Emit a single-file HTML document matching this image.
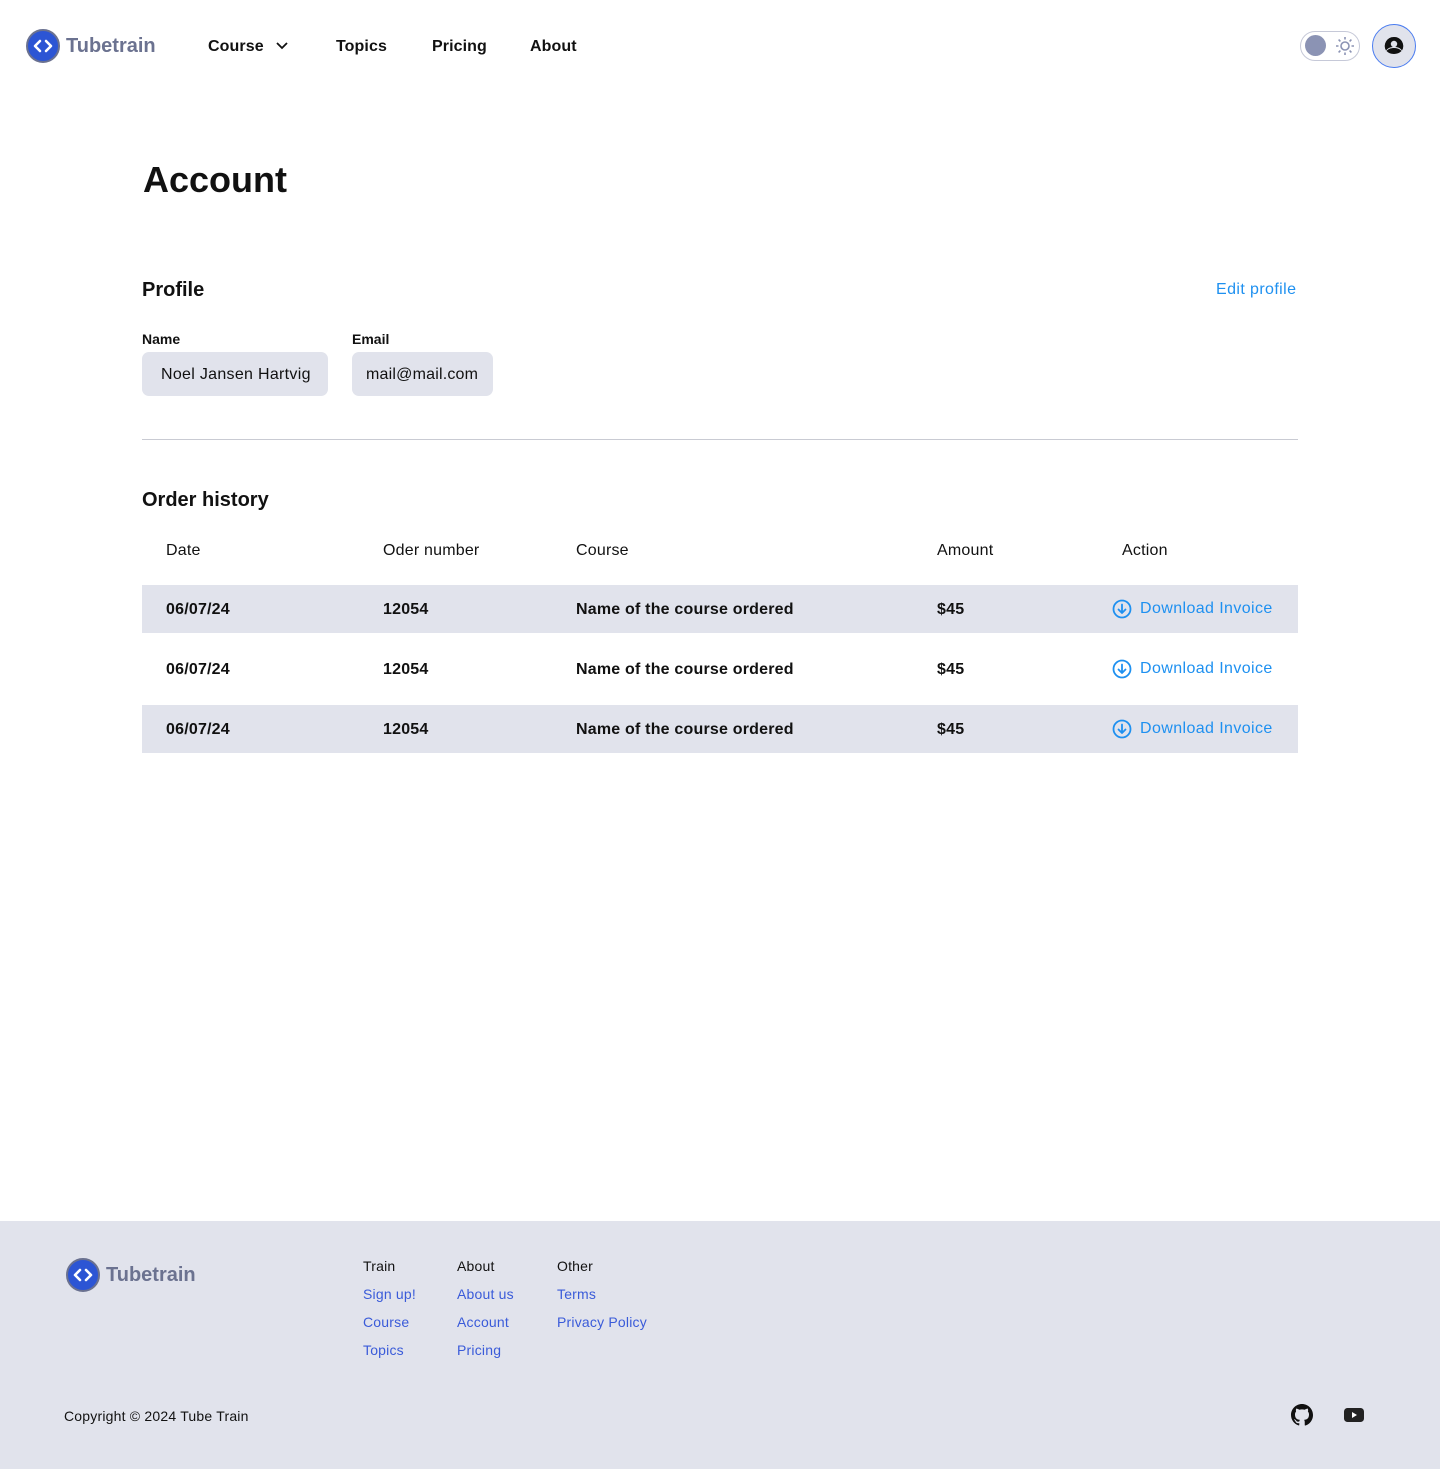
<!DOCTYPE html>
<html><head><meta charset="utf-8"><style>
*{margin:0;padding:0;box-sizing:border-box}
body{width:1440px;height:1469px;position:relative;font-family:"Liberation Sans",sans-serif;color:#111;background:#fff;overflow:hidden}
.a{position:absolute;white-space:nowrap}
.nav{font-size:16px;font-weight:bold;top:38px;letter-spacing:0.1px}
.row{position:absolute;left:142px;width:1156px;height:48px}
.row.g{background:#e1e3ec}
.cell{position:absolute;top:16px;font-size:16px;font-weight:bold;letter-spacing:0.2px}
.dl{position:absolute;left:970px;top:14px;color:#1e90f0;font-size:16px;display:flex;align-items:center;gap:8px;letter-spacing:0.4px}
.fl{font-size:14px;color:#3a5bd9;letter-spacing:0.2px}
.fh{font-size:14px;color:#111;letter-spacing:0.2px}
</style></head><body>
<svg class="a" style="left:26px;top:29px" width="34" height="34" viewBox="0 0 34 34"><circle cx="17" cy="17" r="16" fill="#2c55d4" stroke="#6a7190" stroke-width="2"/><path d="M14 12l-5 5 5 5M20 12l5 5-5 5" stroke="#fff" stroke-width="2.6" fill="none" stroke-linecap="round" stroke-linejoin="round"/></svg>
<div class="a" style="left:66px;top:35px;font-size:20px;font-weight:bold;color:#6b7290">Tubetrain</div>
<div class="a nav" style="left:208px">Course</div>
<svg class="a" style="left:276px;top:42px" width="12" height="8"><path d="M1 1l5 5 5-5" stroke="#111" stroke-width="1.8" fill="none"/></svg>
<div class="a nav" style="left:336px">Topics</div>
<div class="a nav" style="left:432px">Pricing</div>
<div class="a nav" style="left:530px">About</div>
<div class="a" style="left:1300px;top:31px;width:60px;height:30px;border:1px solid #c6c9d8;border-radius:15px"></div>
<div class="a" style="left:1305px;top:35px;width:21px;height:21px;border-radius:50%;background:#8b93b4"></div>
<svg class="a" style="left:1335px;top:36px" width="20" height="20" viewBox="0 0 20 20" stroke="#8b93b4" stroke-width="1.6" fill="none"><circle cx="10" cy="10" r="4"/><path d="M10 1v2.5M10 16.5V19M1 10h2.5M16.5 10H19M3.6 3.6l1.8 1.8M14.6 14.6l1.8 1.8M3.6 16.4l1.8-1.8M14.6 5.4l1.8-1.8"/></svg>
<div class="a" style="left:1372px;top:24px;width:44px;height:44px;border-radius:50%;background:#e1e3ec;border:1.5px solid #4a7cf0"></div>
<svg class="a" style="left:1383px;top:35px" width="22" height="22" viewBox="0 0 22 22"><path d="M11 2a9 9 0 0 0-8 13.5A9 9 0 0 1 11 12a9 9 0 0 1 8 3.5A9 9 0 0 0 11 2z" fill="#111"/><circle cx="11" cy="9" r="3.2" fill="#e1e3ec"/><path d="M3.5 16c1.5 1.5 4 3 7.5 3s6-1.5 7.5-3c-1.5-2-4.5-3-7.5-3s-6 1-7.5 3z" fill="#111"/></svg>

<div class="a" style="left:143px;top:159px;font-size:36px;font-weight:bold">Account</div>
<div class="a" style="left:142px;top:279px;font-size:20px;font-weight:bold">Profile</div>
<div class="a" style="left:1216px;top:281px;font-size:16px;color:#1e90f0;letter-spacing:0.4px">Edit profile</div>
<div class="a" style="left:142px;top:331px;font-size:14px;font-weight:bold">Name</div>
<div class="a" style="left:352px;top:331px;font-size:14px;font-weight:bold">Email</div>
<div class="a" style="left:142px;top:352px;width:186px;height:44px;background:#e1e3ec;border-radius:7px;font-size:16px;padding:14px 0 0 19px;letter-spacing:0.3px">Noel Jansen Hartvig</div>
<div class="a" style="left:352px;top:352px;width:141px;height:44px;background:#e1e3ec;border-radius:7px;font-size:16px;padding:14px 0 0 14px;letter-spacing:0.2px">mail@mail.com</div>
<div class="a" style="left:142px;top:439px;width:1156px;height:1px;background:#c9cbd3"></div>
<div class="a" style="left:142px;top:489px;font-size:20px;font-weight:bold">Order history</div>
<div class="row" style="top:526px">
<div class="cell" style="left:24px;font-weight:normal">Date</div><div class="cell" style="left:241px;font-weight:normal">Oder number</div><div class="cell" style="left:434px;font-weight:normal">Course</div><div class="cell" style="left:795px;font-weight:normal">Amount</div><div class="cell" style="left:980px;font-weight:normal">Action</div></div>
<div class="row g" style="top:585px"><div class="cell" style="left:24px">06/07/24</div><div class="cell" style="left:241px">12054</div><div class="cell" style="left:434px">Name of the course ordered</div><div class="cell" style="left:795px">$45</div><div class="dl"><svg width="20" height="20" viewBox="0 0 20 20" fill="none" stroke="#1e90f0" stroke-width="1.8"><circle cx="10" cy="10" r="8.5"/><path d="M10 5.5v8M6.5 10.5l3.5 3.5 3.5-3.5" stroke-linecap="round" stroke-linejoin="round"/></svg>Download Invoice</div></div>
<div class="row" style="top:645px"><div class="cell" style="left:24px">06/07/24</div><div class="cell" style="left:241px">12054</div><div class="cell" style="left:434px">Name of the course ordered</div><div class="cell" style="left:795px">$45</div><div class="dl"><svg width="20" height="20" viewBox="0 0 20 20" fill="none" stroke="#1e90f0" stroke-width="1.8"><circle cx="10" cy="10" r="8.5"/><path d="M10 5.5v8M6.5 10.5l3.5 3.5 3.5-3.5" stroke-linecap="round" stroke-linejoin="round"/></svg>Download Invoice</div></div>
<div class="row g" style="top:705px"><div class="cell" style="left:24px">06/07/24</div><div class="cell" style="left:241px">12054</div><div class="cell" style="left:434px">Name of the course ordered</div><div class="cell" style="left:795px">$45</div><div class="dl"><svg width="20" height="20" viewBox="0 0 20 20" fill="none" stroke="#1e90f0" stroke-width="1.8"><circle cx="10" cy="10" r="8.5"/><path d="M10 5.5v8M6.5 10.5l3.5 3.5 3.5-3.5" stroke-linecap="round" stroke-linejoin="round"/></svg>Download Invoice</div></div>

<div class="a" style="left:0;top:1221px;width:1440px;height:248px;background:#e1e3ec"></div>
<svg class="a" style="left:66px;top:1258px" width="34" height="34" viewBox="0 0 34 34"><circle cx="17" cy="17" r="16" fill="#2c55d4" stroke="#6a7190" stroke-width="2"/><path d="M14 12l-5 5 5 5M20 12l5 5-5 5" stroke="#fff" stroke-width="2.6" fill="none" stroke-linecap="round" stroke-linejoin="round"/></svg>
<div class="a" style="left:106px;top:1264px;font-size:20px;font-weight:bold;color:#6b7290">Tubetrain</div>
<div class="a fh" style="left:363px;top:1258px">Train</div>
<div class="a fl" style="left:363px;top:1286px">Sign up!</div>
<div class="a fl" style="left:363px;top:1314px">Course</div>
<div class="a fl" style="left:363px;top:1342px">Topics</div>
<div class="a fh" style="left:457px;top:1258px">About</div>
<div class="a fl" style="left:457px;top:1286px">About us</div>
<div class="a fl" style="left:457px;top:1314px">Account</div>
<div class="a fl" style="left:457px;top:1342px">Pricing</div>
<div class="a fh" style="left:557px;top:1258px">Other</div>
<div class="a fl" style="left:557px;top:1286px">Terms</div>
<div class="a fl" style="left:557px;top:1314px">Privacy Policy</div>
<div class="a fh" style="left:64px;top:1408px">Copyright © 2024 Tube Train</div>
<svg class="a" style="left:1291px;top:1404px" width="22" height="22" viewBox="0 0 16 16"><path fill="#111" d="M8 0C3.58 0 0 3.58 0 8c0 3.54 2.29 6.530 5.47 7.59.4.07.55-.17.55-.38v-1.33c-2.23.48-2.7-1.070-2.7-1.07-.36-.92-.89-1.17-.89-1.17-.73-.5.06-.49.06-.49.8.06 1.23.83 1.23.83.71 1.23 1.87.87 2.33.67.07-.52.28-.87.5-1.07-1.78-.2-3.65-.89-3.65-3.95 0-.87.31-1.59.82-2.15-.08-.2-.36-1.02.08-2.12 0 0 .67-.21 2.2.82a7.6 7.6 0 0 1 4 0c1.53-1.04 2.2-.82 2.2-.82.44 1.1.16 1.92.08 2.12.51.56.82 1.27.82 2.15 0 3.07-1.87 3.75-3.65 3.95.29.25.54.73.54 1.48v2.2c0 .21.15.46.55.38A8 8 0 0 0 16 8c0-4.42-3.58-8-8-8z"/></svg>
<svg class="a" style="left:1344px;top:1407px" width="20" height="16" viewBox="0 0 20 16"><rect x="0" y="1" width="20" height="14" rx="3.5" fill="#222"/><path d="M8 5v6l5-3z" fill="#fff"/></svg>
</body></html>
